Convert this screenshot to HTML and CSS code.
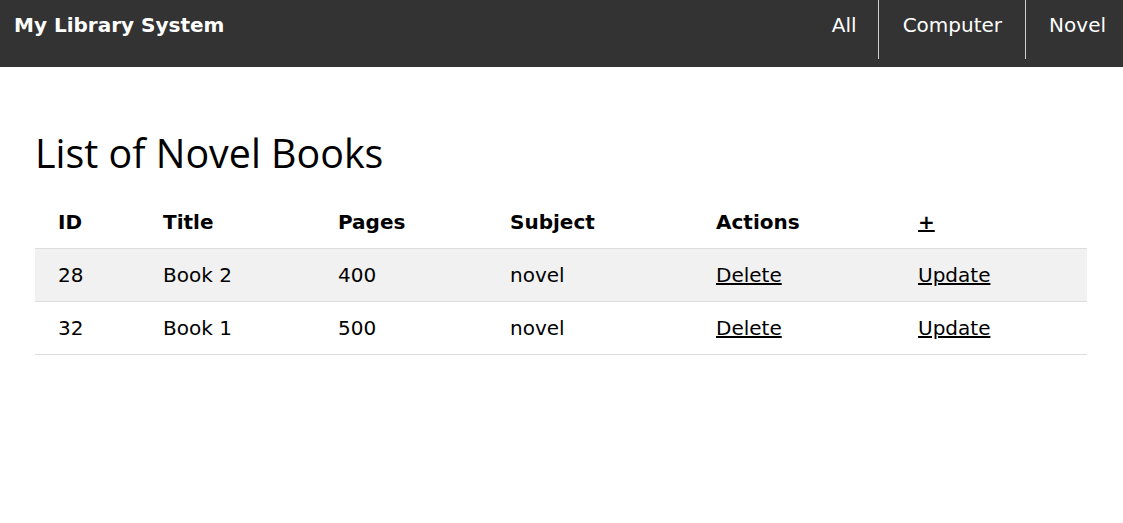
FILE: index.html
```html
<!DOCTYPE html>
<html>
<head>
<meta charset="utf-8">
<title>My Library System</title>
<link rel="stylesheet" href="styles.css">
</head>
<body>
<nav class="topbar">
  <a class="brand" href="#">My Library System</a>
  <div class="nav-links">
    <a class="nav-item" href="#">All</a>
    <a class="nav-item sep" href="#">Computer</a>
    <a class="nav-item sep" href="#">Novel</a>
  </div>
</nav>
<main class="content">
  <h1 class="title">List of Novel Books</h1>
  <table class="books">
    <colgroup>
      <col class="c-id"><col class="c-title"><col class="c-pages"><col class="c-subject"><col class="c-actions"><col class="c-extra">
    </colgroup>
    <thead>
      <tr><th>ID</th><th>Title</th><th>Pages</th><th>Subject</th><th>Actions</th><th><a href="#">+</a></th></tr>
    </thead>
    <tbody>
      <tr class="stripe"><td>28</td><td>Book 2</td><td>400</td><td>novel</td><td><a href="#">Delete</a></td><td><a href="#">Update</a></td></tr>
      <tr><td>32</td><td>Book 1</td><td>500</td><td>novel</td><td><a href="#">Delete</a></td><td><a href="#">Update</a></td></tr>
    </tbody>
  </table>
</main>
</body>
</html>
```
FILE: styles.css
```css
html, body {
  margin: 0;
  padding: 0;
  background: #fff;
  color: #000;
  font-family: "DejaVu Sans", Verdana, sans-serif;
  font-size: 20px;
}

.topbar {
  display: flex;
  align-items: flex-start;
  height: 67px;
  background: #333333;
}

.brand {
  color: #fff;
  text-decoration: none;
  font-weight: bold;
  font-size: 20px;
  line-height: 24px;
  padding: 13px 14px 0 14px;
}

.nav-links {
  display: flex;
  margin-left: auto;
}

.nav-item {
  display: block;
  color: #fff;
  text-decoration: none;
  line-height: 24px;
  height: 59px;
  box-sizing: border-box;
  padding: 13px 23px 0 24px;
}

.nav-item:first-child {
  padding-left: 22px;
  padding-right: 21px;
}

.nav-item:last-child {
  padding-left: 23px;
  padding-right: 17px;
}

.nav-item.sep {
  border-left: 1px solid #cfcfcf;
}

.content {
  padding: 62px 36px 0 35px;
}

.title {
  margin: 0 0 19px 0;
  font-family: "Open Sans", "Segoe UI", sans-serif;
  font-weight: 400;
  font-size: 39.4px;
  line-height: 48px;
}

.books {
  width: 1052px;
  border-collapse: collapse;
  table-layout: fixed;
}

.c-id { width: 105px; }
.c-title { width: 175px; }
.c-pages { width: 172px; }
.c-subject { width: 206px; }
.c-actions { width: 202px; }
.c-extra { width: 192px; }

.books th,
.books td {
  text-align: left;
  padding: 14px 0 14px 23px;
  line-height: 24px;
  border-bottom: 1px solid #dddddd;
}

.books th {
  font-weight: bold;
}

.books tr.stripe {
  background: #f1f1f1;
}

.books a {
  color: #000;
  text-decoration: underline;
}
```
